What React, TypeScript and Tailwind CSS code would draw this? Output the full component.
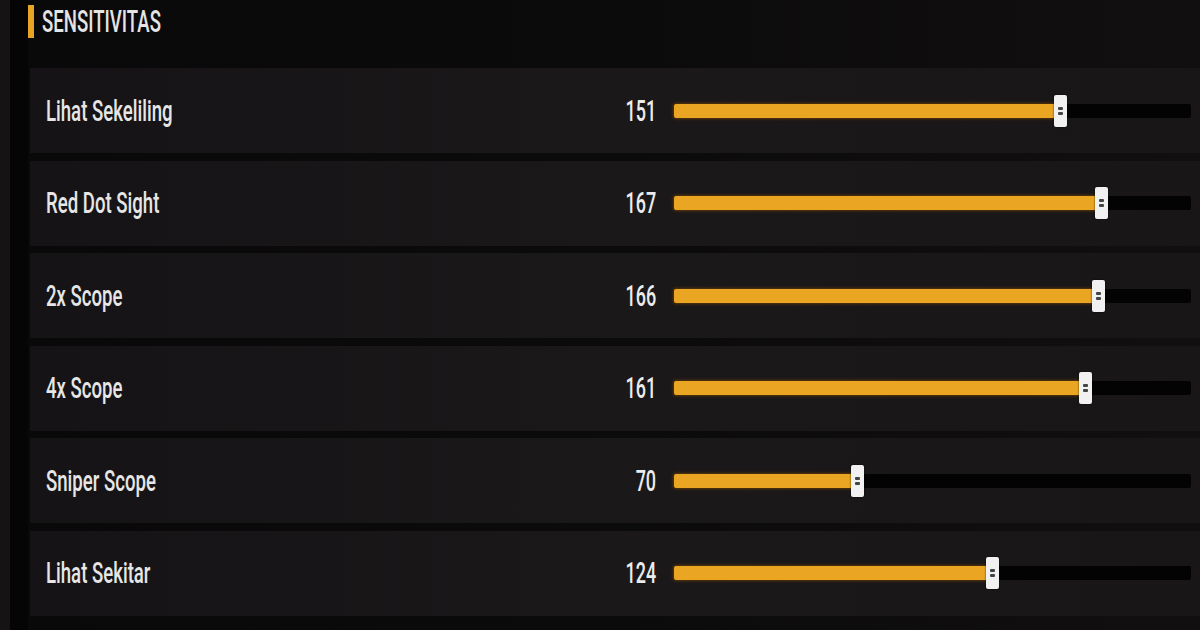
import React from "react";

type Setting = { label: string; value: number };

const settings: Setting[] = [
  { label: "Lihat Sekeliling", value: 151 },
  { label: "Red Dot Sight", value: 167 },
  { label: "2x Scope", value: 166 },
  { label: "4x Scope", value: 161 },
  { label: "Sniper Scope", value: 70 },
  { label: "Lihat Sekitar", value: 124 },
];

const FONT = { fontFamily: "Roboto, 'Liberation Sans', sans-serif" };

// slider geometry: value 0 sits 7px in, each unit is ~2.515px
const thumbCenter = (v: number) => 7 + v * 2.515;

function Slider({ value }: { value: number }) {
  const c = thumbCenter(value);
  return (
    <div className="relative h-[14px] w-[517px] rounded-[2px] bg-[#040304]">
      <div
        className="absolute left-0 top-0 h-full rounded-l-[2px] bg-[#eaa622] shadow-[0_0_3px_1px_rgba(120,70,0,0.7)]"
        style={{ width: c }}
      />
      <div
        className="absolute top-1/2 flex h-[32px] w-[13px] -translate-y-1/2 flex-col items-center justify-center gap-[2px] rounded-[2px] bg-[#f1f1f1] shadow-[0_0_2px_rgba(0,0,0,0.8)]"
        style={{ left: c - 6.5 }}
      >
        <div className="h-[3px] w-[5px] rounded-[1px] bg-[#444]" />
        <div className="h-[3px] w-[5px] rounded-[1px] bg-[#444]" />
      </div>
    </div>
  );
}

function Row({ label, value }: Setting) {
  return (
    <div className="flex h-[85px] items-center bg-gradient-to-r from-[#151315] via-[#1b181a] to-[#191618]">
      <div className="w-[560px] pl-[16px]">
        <span
          className="inline-block origin-left scale-x-[0.62] text-[30px] font-medium leading-[34px] text-[#e6e6e6]"
          style={FONT}
        >
          {label}
        </span>
      </div>
      <div className="w-[66px] text-right">
        <span
          className="inline-block origin-right scale-x-[0.6] text-[30px] font-medium leading-[34px] text-[#ececec]"
          style={FONT}
        >
          {value}
        </span>
      </div>
      <div className="ml-[18px]">
        <Slider value={value} />
      </div>
    </div>
  );
}

export default function App() {
  return (
    <div className="flex h-[630px] w-[1200px] overflow-hidden bg-[#0b0a0b]">
      <div className="w-[10px] bg-[#161315]" />
      <div className="w-[18px] bg-[#060506]" />
      <div className="flex flex-1 flex-col bg-gradient-to-r from-[#0a090a] via-[#0c0b0c] to-[#110f10]">
        <div className="flex h-[68px] items-start pt-[5px]">
          <div className="h-[33px] w-[6px] bg-[#e9a423]" />
          <span
            className="ml-[8px] inline-block origin-left scale-x-[0.6] text-[31px] font-medium leading-[33px] text-[#e4e4e4]"
            style={FONT}
          >
            SENSITIVITAS
          </span>
        </div>
        <div className="ml-[2px] flex flex-col gap-[7.5px]">
          {settings.map((s) => (
            <Row key={s.label} {...s} />
          ))}
        </div>
      </div>
    </div>
  );
}
